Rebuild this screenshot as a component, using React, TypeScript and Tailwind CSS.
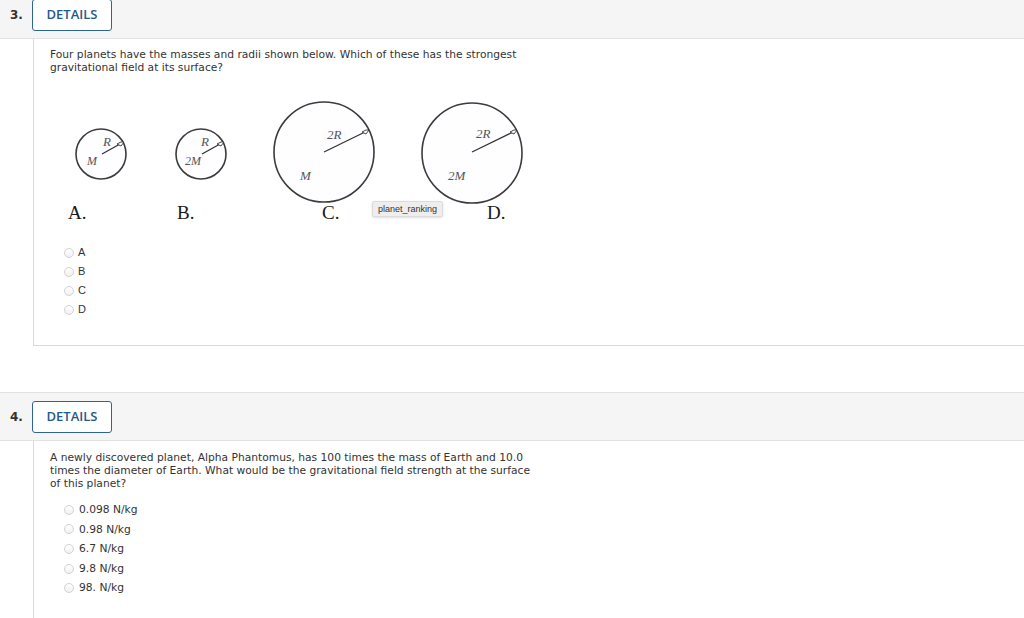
import React from 'react';

const body = "font-['DejaVu_Sans',Verdana,sans-serif]";

const Radio = () => (
  <span className="mr-[4px] inline-block h-[10px] w-[10px] shrink-0 rounded-full border border-[#d3d3d3] bg-gradient-to-b from-white to-[#f1f1f1]" />
);

const Header = ({ num }: { num: string }) => (
  <div className="flex h-[49px] border-y border-[#e1e1e1] bg-[#f5f5f5] pt-[8px]">
    <div className={`w-[32px] pl-[10px] pt-[9px] text-[12px] font-bold leading-[14px] text-[#333] ${body}`}>{num}</div>
    <button
      type="button"
      className="h-[32px] w-[80px] rounded-[3px] border border-[#2d6597] bg-white font-['Open_Sans',sans-serif] text-[13px] font-semibold text-[#25598a]"
    >
      DETAILS
    </button>
  </div>
);

const Planets = () => (
  <div className="relative mt-[21px] h-[130px] w-[480px]">
    <svg width="480" height="130" viewBox="50 95 480 130" className="block">
      <g fill="#fefdff" stroke="#3c3c3c" strokeWidth="1.6">
        <circle cx="101" cy="154" r="25" />
        <circle cx="201" cy="154" r="25" />
        <circle cx="324" cy="152" r="50" />
        <circle cx="472" cy="153" r="50" />
      </g>
      <g stroke="#333" strokeWidth="1.3">
        <line x1="102" y1="154" x2="120" y2="144" />
        <line x1="202" y1="154" x2="220" y2="144" />
        <line x1="324" y1="152" x2="365" y2="132" />
        <line x1="472" y1="152" x2="513" y2="132" />
      </g>
      <g fill="#fff" stroke="#333" strokeWidth="0.9">
        <polygon points="117,144 121,142 124,142 121,146" />
        <polygon points="217,144 221,142 224,142 221,146" />
        <polygon points="362,132 366,130 369,130 366,134" />
        <polygon points="510,132 514,130 517,130 514,134" />
      </g>
      <g fill="#555" fontFamily="'Liberation Serif', serif" fontStyle="italic">
        <text x="103" y="146" fontSize="13">R</text>
        <text x="87" y="165" fontSize="12">M</text>
        <text x="201" y="146" fontSize="13">R</text>
        <text x="185" y="165" fontSize="12">2M</text>
        <text x="327" y="139" fontSize="13">2R</text>
        <text x="300" y="180" fontSize="13">M</text>
        <text x="476" y="138" fontSize="13">2R</text>
        <text x="448" y="180" fontSize="13">2M</text>
      </g>
      <g fill="#1a1a1a" fontFamily="'Liberation Serif', serif" fontSize="19">
        <text x="68" y="219">A.</text>
        <text x="177" y="219">B.</text>
        <text x="322" y="219">C.</text>
        <text x="487" y="219">D.</text>
      </g>
    </svg>
    {/* hover title over the picture */}
    <div className="absolute left-[322px] top-[106px] rounded-[2px] border border-[#dcdcdc] bg-[#efeded] px-[5px] font-['Liberation_Sans',Arial,sans-serif] text-[9px] leading-[14px] text-[#333] shadow-sm">
      planet_ranking
    </div>
  </div>
);

export default function App() {
  const q4 = ['0.098 N/kg', '0.98 N/kg', '6.7 N/kg', '9.8 N/kg', '98. N/kg'];

  return (
    <div className="h-[618px] overflow-hidden bg-white text-[#333]">
      <section className="-mt-[10px]">
        <Header num="3." />
        <div className={`ml-[33px] h-[307px] border-b border-l border-[#d9d9d9] pl-[16px] pt-[9px] ${body}`}>
          <p className="w-[484px] text-[10.7px] leading-[13px]">
            Four planets have the masses and radii shown below. Which of these has the strongest gravitational field at its surface?
          </p>
          <Planets />
          <ul className="mt-[18px] pl-[14px] font-['Liberation_Sans',Arial,sans-serif] text-[11px] leading-[19.1px]">
            {['A', 'B', 'C', 'D'].map((o) => (
              <li key={o} className="flex items-center">
                <Radio />
                {o}
              </li>
            ))}
          </ul>
        </div>
      </section>

      <section className="mt-[46px]">
        <Header num="4." />
        <div className={`ml-[33px] h-[200px] border-l border-[#d9d9d9] pl-[16px] pt-[10px] ${body}`}>
          <p className="w-[486px] text-[10.7px] leading-[13px]">
            A newly discovered planet, Alpha Phantomus, has 100 times the mass of Earth and 10.0 times the diameter of Earth. What would be the gravitational field strength at the surface of this planet?
          </p>
          <ul className="mt-[10px] pl-[14px] text-[10.7px] leading-[19.6px]">
            {q4.map((o) => (
              <li key={o} className="flex items-center">
                <Radio />
                <span className="ml-[1px]">{o}</span>
              </li>
            ))}
          </ul>
        </div>
      </section>
    </div>
  );
}
